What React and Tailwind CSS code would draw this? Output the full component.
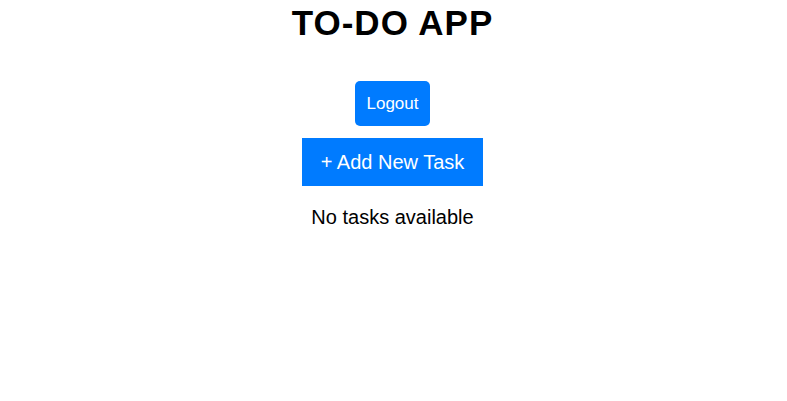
export default function App() {
  return (
    <div className="flex flex-col items-center bg-white min-h-[401px] pr-[2px] font-['Liberation_Sans',Arial,sans-serif] text-black">
      <h1 className="mt-[3px] text-[35px] leading-[40px] font-bold tracking-[1px]">TO-DO APP</h1>
      <button className="mt-[38px] w-[75px] h-[45px] rounded-[5px] bg-[#007bff] text-white text-[17px] leading-[20px]">Logout</button>
      <button className="mt-[12px] w-[181px] h-[48px] bg-[#007bff] text-white text-[20px] leading-[23px]">+ Add New Task</button>
      <p className="mt-[20px] text-[20px] leading-[23px]">No tasks available</p>
    </div>
  );
}
